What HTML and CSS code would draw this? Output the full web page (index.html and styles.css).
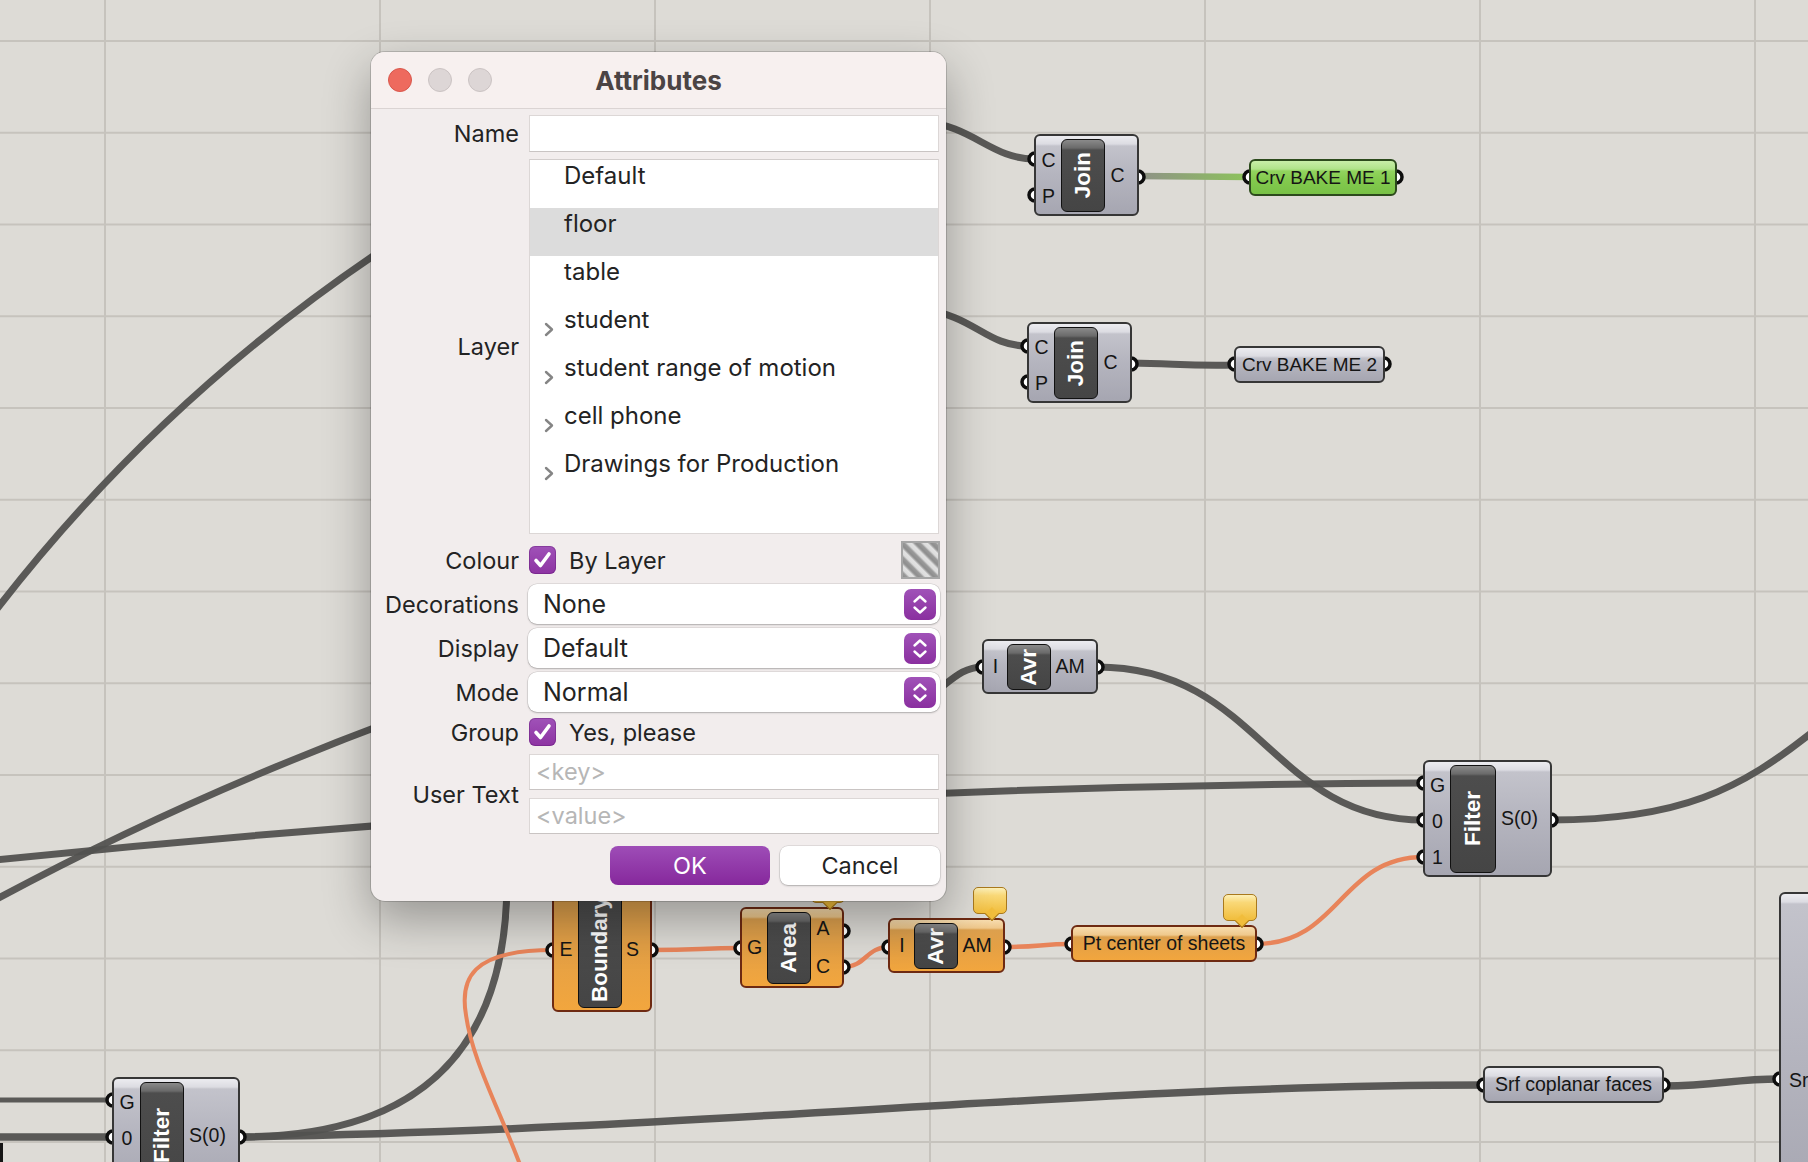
FILE: index.html
```html
<!DOCTYPE html>
<html lang="en">
<head>
<meta charset="utf-8">
<title>Attributes</title>
<link rel="stylesheet" href="styles.css">
</head>
<body>
<div class="canvas">
  <svg class="wires" width="1808" height="1162" viewBox="0 0 1808 1162">
    <defs>
      <linearGradient id="gw" gradientUnits="userSpaceOnUse" x1="1140" y1="0" x2="1248" y2="0">
        <stop offset="0" stop-color="#8f9287"/>
        <stop offset="1" stop-color="#8cc35b"/>
      </linearGradient>
    </defs>
    <g class="w">
      <path d="M -10 618 Q 160 395 400 238"/>
      <path d="M 920 121 C 975 126 990 159 1035 159"/>
      <path d="M 920 309 C 975 315 985 346 1028 346"/>
      <path d="M 1131 363 C 1180 364 1190 366 1235 365"/>
      <path d="M 930 696 C 952 680 962 667 983 667"/>
      <path d="M 1097 667 C 1260 667 1270 820 1424 820"/>
      <path d="M -5 860 C 400 818 900 785 1424 783"/>
      <path d="M -5 900 Q 180 800 400 718"/>
      <path class="thin" d="M -5 1100 L 113 1100"/>
      <path class="thick" d="M -5 1137 L 113 1137"/>
      <path d="M 239 1137 C 420 1137 507 1050 507 880"/>
      <path class="thick" d="M 239 1137 C 700 1130 1100 1085 1484 1085"/>
      <path class="thick" d="M 1663 1086 C 1720 1086 1730 1079 1780 1079"/>
      <path d="M 1551 820 C 1680 820 1740 790 1815 730"/>
    </g>
    <path class="wg" d="M 1138 176 L 1250 177"/>
    <g class="o">
      <path class="othin" d="M 553 950 C 470 950 460 980 466 1015 C 472 1060 500 1110 522 1170"/>
      <path d="M 651 950 C 700 950 700 948 741 948"/>
      <path d="M 843 967 C 866 967 866 947 889 947"/>
      <path d="M 1004 947 C 1040 947 1040 944 1072 944"/>
      <path d="M 1256 944 C 1340 944 1340 857 1424 857"/>
    </g>
    <g class="ports">
      <circle cx="1035" cy="159" r="6"/><circle cx="1035" cy="195" r="6"/><circle cx="1138" cy="177" r="6"/>
      <circle cx="1250" cy="177" r="6"/><circle cx="1396" cy="177" r="6"/>
      <circle cx="1028" cy="346" r="6"/><circle cx="1028" cy="382" r="6"/><circle cx="1131" cy="364" r="6"/>
      <circle cx="1235" cy="364" r="6"/><circle cx="1384" cy="364" r="6"/>
      <circle cx="983" cy="667" r="6"/><circle cx="1097" cy="667" r="6"/>
      <circle cx="1424" cy="783" r="6"/><circle cx="1424" cy="820" r="6"/><circle cx="1424" cy="857" r="6"/><circle cx="1551" cy="820" r="6"/>
      <circle cx="553" cy="950" r="6"/><circle cx="651" cy="950" r="6"/>
      <circle cx="741" cy="948" r="6"/><circle cx="843" cy="931" r="6"/><circle cx="843" cy="967" r="6"/>
      <circle cx="889" cy="947" r="6"/><circle cx="1004" cy="947" r="6"/>
      <circle cx="1072" cy="944" r="6"/><circle cx="1256" cy="944" r="6"/>
      <circle cx="113" cy="1100" r="6"/><circle cx="113" cy="1137" r="6"/><circle cx="239" cy="1137" r="6"/>
      <circle cx="1484" cy="1085" r="6"/><circle cx="1663" cy="1085" r="6"/>
      <circle cx="1780" cy="1079" r="6"/>
    </g>
  </svg>

  <div class="node comp gray n-join1">
    <div class="ins pt6"><span>C</span><span>P</span></div>
    <div class="core"><span>Join</span></div>
    <div class="outs"><span>C</span></div>
  </div>
  <div class="node param green n-crv1">Crv BAKE ME 1</div>

  <div class="node comp gray n-join2">
    <div class="ins pt6"><span>C</span><span>P</span></div>
    <div class="core"><span>Join</span></div>
    <div class="outs"><span>C</span></div>
  </div>
  <div class="node param gray n-crv2">Crv BAKE ME 2</div>

  <div class="node comp gray n-avr">
    <div class="ins w23"><span>I</span></div>
    <div class="core"><span>Avr</span></div>
    <div class="outs"><span>AM</span></div>
  </div>

  <div class="node comp gray n-filterR">
    <div class="ins pt5"><span>G</span><span>0</span><span>1</span></div>
    <div class="core wide"><span>Filter</span></div>
    <div class="outs"><span>S(0)</span></div>
  </div>

  <div class="node comp orange n-boundary">
    <div class="ins w24"><span>E</span></div>
    <div class="core"><span>Boundary</span></div>
    <div class="outs"><span>S</span></div>
  </div>

  <div class="node bubble b-area"></div>
  <div class="node comp orange n-area">
    <div class="ins"><span>G</span></div>
    <div class="core"><span>Area</span></div>
    <div class="outs"><span>A</span><span>C</span></div>
  </div>

  <div class="node bubble b-avr2"></div>
  <div class="node comp orange n-avr2">
    <div class="ins w24"><span>I</span></div>
    <div class="core"><span>Avr</span></div>
    <div class="outs"><span>AM</span></div>
  </div>

  <div class="node bubble b-pt"></div>
  <div class="node param orange n-pt">Pt center of sheets</div>

  <div class="node comp gray n-filterL">
    <div class="ins w26 pt5"><span>G</span><span>0</span><span>1</span></div>
    <div class="core"><span>Filter</span></div>
    <div class="outs"><span>S(0)</span></div>
  </div>

  <div class="node param gray n-srf">Srf coplanar faces</div>

  <div class="node gray n-big"><span class="big-lbl">Sr</span></div>
  <div class="node n-sliver"></div>

  <div class="dialog">
    <div class="titlebar">
      <div class="lights"><span class="light close"></span><span class="light"></span><span class="light"></span></div>
      <div class="title">Attributes</div>
      <div></div>
    </div>
    <div class="dbody">
      <div class="row r-name">
        <span class="lbl">Name</span>
        <div class="field textfield"></div>
      </div>
      <div class="row r-layer">
        <span class="lbl">Layer</span>
        <div class="field list">
          <div class="item"><span class="chev"></span><span class="itxt">Default</span></div>
          <div class="item sel"><span class="chev"></span><span class="itxt">floor</span></div>
          <div class="item"><span class="chev"></span><span class="itxt">table</span></div>
          <div class="item"><span class="chev"><svg width="12" height="16" viewBox="0 0 12 16"><path d="M3 3 L9 8.5 L3 14"/></svg></span><span class="itxt">student</span></div>
          <div class="item"><span class="chev"><svg width="12" height="16" viewBox="0 0 12 16"><path d="M3 3 L9 8.5 L3 14"/></svg></span><span class="itxt">student range of motion</span></div>
          <div class="item"><span class="chev"><svg width="12" height="16" viewBox="0 0 12 16"><path d="M3 3 L9 8.5 L3 14"/></svg></span><span class="itxt">cell phone</span></div>
          <div class="item"><span class="chev"><svg width="12" height="16" viewBox="0 0 12 16"><path d="M3 3 L9 8.5 L3 14"/></svg></span><span class="itxt">Drawings for Production</span></div>
        </div>
      </div>
      <div class="row r-colour">
        <span class="lbl">Colour</span>
        <div class="field checkline">
          <span class="cb"><svg width="27" height="28" viewBox="0 0 27 28"><path d="M7 14.5 L11.5 19.5 L20 8"/></svg></span>
          <span class="cbtxt">By Layer</span>
          <span class="swatch"></span>
        </div>
      </div>
      <div class="row r-pop r-first">
        <span class="lbl">Decorations</span>
        <div class="field popup"><span class="ptxt">None</span><span class="stepper"><svg width="32" height="31" viewBox="0 0 32 31"><path d="M10.5 12.5 L16 7.5 L21.5 12.5 M10.5 18.5 L16 23.5 L21.5 18.5"/></svg></span></div>
      </div>
      <div class="row r-pop">
        <span class="lbl">Display</span>
        <div class="field popup"><span class="ptxt">Default</span><span class="stepper"><svg width="32" height="31" viewBox="0 0 32 31"><path d="M10.5 12.5 L16 7.5 L21.5 12.5 M10.5 18.5 L16 23.5 L21.5 18.5"/></svg></span></div>
      </div>
      <div class="row r-pop">
        <span class="lbl">Mode</span>
        <div class="field popup"><span class="ptxt">Normal</span><span class="stepper"><svg width="32" height="31" viewBox="0 0 32 31"><path d="M10.5 12.5 L16 7.5 L21.5 12.5 M10.5 18.5 L16 23.5 L21.5 18.5"/></svg></span></div>
      </div>
      <div class="row r-group">
        <span class="lbl">Group</span>
        <div class="field checkline">
          <span class="cb"><svg width="27" height="28" viewBox="0 0 27 28"><path d="M7 14.5 L11.5 19.5 L20 8"/></svg></span>
          <span class="cbtxt">Yes, please</span>
        </div>
      </div>
      <div class="row r-user">
        <span class="lbl">User Text</span>
        <div class="field stack">
          <div class="textfield ph">&lt;key&gt;</div>
          <div class="textfield ph">&lt;value&gt;</div>
        </div>
      </div>
      <div class="buttons">
        <button class="btn ok">OK</button>
        <button class="btn cancel">Cancel</button>
      </div>
    </div>
  </div>
</div>
</body>
</html>
```

FILE: styles.css
```css
* { box-sizing: border-box; }
html, body { margin: 0; padding: 0; }
body { width: 1808px; height: 1162px; overflow: hidden; background: #dddbd6; }

.canvas {
  position: relative;
  width: 1808px;
  height: 1162px;
  overflow: hidden;
  background-color: #dddbd6;
  background-image:
    linear-gradient(90deg, #c6c3bd 0, #c6c3bd 2px, transparent 2px),
    linear-gradient(180deg, #c6c3bd 0, #c6c3bd 2px, transparent 2px);
  background-size: 275px 100%, 100% 91.75px;
  background-position: 104px 0, 0 40px;
}

.wires { position: absolute; left: 0; top: 0; z-index: 1; }
.wires .w path { fill: none; stroke: #525250; stroke-width: 7; stroke-linecap: round; opacity: 0.95; }
.wires .w path.thin { stroke-width: 5; }
.wires .w path.thick { stroke-width: 7.5; }
.wires .wg { fill: none; stroke: url(#gw); stroke-width: 6.5; }
.wires .o path { fill: none; stroke: #e8845a; stroke-width: 4.5; stroke-linecap: round; }
.wires .o path.othin { stroke-width: 4; }
.wires .ports circle { fill: #fff; stroke: #0d0d0d; stroke-width: 3.5; }

/* ---------- canvas nodes ---------- */
.node { position: absolute; z-index: 2; }
.comp {
  display: flex;
  border: 2px solid #363636;
  border-radius: 6px;
  font-family: "Liberation Sans", Arial, sans-serif;
  font-size: 19.5px;
  color: #151515;
}
.gray {
  background: linear-gradient(180deg, #ececf0 0, #dcdce2 8px, #c3c3cb 10px, #b6b6c0 45%, #a6a6b1 100%);
  border: 2px solid #363636;
  border-radius: 6px;
}
.orange {
  background: linear-gradient(180deg, #f7dcae 0, #efc88c 8px, #dca04e 10px, #e4a045 50%, #f2a63e 100%);
  border: 2px solid #6e2a12;
  border-radius: 6px;
}
.green {
  background: linear-gradient(180deg, #c8eea8 0, #b0e38a 8px, #92d45e 10px, #84cb4f 55%, #78c146 100%);
  border: 2px solid #2c4a1c;
  border-radius: 6px;
}

.ins { width: 25px; flex: none; display: flex; flex-direction: column; }
.ins.w23 { width: 23px; }
.ins.w24 { width: 24px; }
.ins.w26 { width: 26px; }
.ins.pt6 { padding-top: 6px; }
.ins.pt5 { padding-top: 5px; }
.outs { flex: 1; display: flex; flex-direction: column; }
.ins span, .outs span { flex: 1; display: flex; align-items: center; justify-content: center; }
.outs span { padding-right: 7px; }

.core {
  width: 44px;
  flex: none;
  margin: 3px 0 2px;
  border: 1.5px solid #111;
  border-radius: 6px;
  background: linear-gradient(180deg, #8a8a8a 0, #6a6a6a 8px, #4d4d4d 10px, #454545 100%);
  display: flex;
  align-items: center;
  justify-content: center;
  overflow: visible;
}
.core.wide { width: 46px; }
.core span {
  writing-mode: vertical-rl;
  transform: rotate(180deg);
  color: #fff;
  font-weight: bold;
  font-size: 22.5px;
  white-space: nowrap;
  line-height: 1;
}

.param {
  display: flex;
  align-items: center;
  justify-content: center;
  font-family: "Liberation Sans", Arial, sans-serif;
  font-size: 19px;
  color: #151515;
  white-space: nowrap;
}

.n-join1 { left: 1034px; top: 134px; width: 105px; height: 82px; }
.n-crv1 { left: 1249px; top: 159px; width: 148px; height: 37px; }
.n-join2 { left: 1027px; top: 322px; width: 105px; height: 81px; }
.n-crv2 { left: 1234px; top: 346px; width: 151px; height: 37px; }
.n-avr { left: 982px; top: 639px; width: 116px; height: 55px; }
.n-filterR { left: 1423px; top: 760px; width: 129px; height: 117px; }
.n-boundary { left: 552px; top: 886px; width: 100px; height: 126px; }
.n-area { left: 740px; top: 907px; width: 104px; height: 81px; }
.n-avr2 { left: 888px; top: 918px; width: 117px; height: 55px; }
.n-pt { left: 1071px; top: 925px; width: 186px; height: 37px; font-size: 19.5px; }
.n-filterL { left: 112px; top: 1077px; width: 128px; height: 117px; }
.n-srf { left: 1483px; top: 1066px; width: 181px; height: 37px; font-size: 19.5px; }
.n-big { left: 1779px; top: 892px; width: 80px; height: 320px; font-family: "Liberation Sans", Arial, sans-serif; font-size: 19.5px; color: #151515; }
.big-lbl { display: block; margin: 175px 0 0 8px; }
.n-sliver { left: 0; top: 1143px; width: 3px; height: 19px; background: #151515; }

.bubble {
  width: 34px;
  height: 27px;
  border: 1.5px solid #a9791d;
  border-radius: 5px;
  background: linear-gradient(180deg, #fdf0b8 0, #f9d877 30%, #f1bd3c 100%);
  z-index: 3;
}
.bubble::after {
  content: "";
  position: absolute;
  left: 13px;
  bottom: -6px;
  width: 9px;
  height: 9px;
  background: #f1bd3c;
  border-right: 1.5px solid #a9791d;
  border-bottom: 1.5px solid #a9791d;
  transform: rotate(45deg);
}
.b-area { left: 811px; top: 876px; }
.b-avr2 { left: 973px; top: 887px; }
.b-pt { left: 1223px; top: 894px; }

/* ---------- dialog ---------- */
.dialog {
  position: absolute;
  left: 371px;
  top: 52px;
  width: 575px;
  z-index: 10;
  background: #f2eded;
  border-radius: 14px;
  box-shadow: 0 0 0 1px rgba(0,0,0,0.16), 0 18px 48px rgba(0,0,0,0.32);
  font-family: "Inter", "Noto Sans", sans-serif;
  font-size: 23.5px;
  color: #232323;
  overflow: hidden;
}
.titlebar {
  height: 57px;
  display: grid;
  grid-template-columns: 1fr auto 1fr;
  align-items: center;
  background: #f7f0ef;
  border-bottom: 1px solid #dbd4d3;
}
.lights { display: flex; gap: 16px; padding-left: 17px; }
.light {
  width: 24px;
  height: 24px;
  border-radius: 50%;
  background: #ddd6d6;
  border: 1px solid #cbc3c3;
}
.light.close { background: #ee6a5e; border-color: #d9574c; }
.title { font-weight: 700; font-size: 26px; color: #4b4444; }

.dbody { padding: 6px 7px 16px 0; }
.row { display: flex; align-items: center; gap: 10px; }
.lbl { width: 148px; flex: none; text-align: right; white-space: nowrap; }
.field { width: 410px; flex: none; }

.textfield {
  height: 37px;
  background: #fff;
  border: 1px solid #dcd7d6;
  border-bottom-color: #c9c4c3;
}
.r-layer { margin-top: 7px; }
.list {
  height: 375px;
  background: #fff;
  border: 1px solid #dcd7d6;
  border-top: 1px solid #d2cdcc;
}
.item { height: 48px; display: flex; align-items: flex-start; padding-left: 13px; }
.item.sel { background: #dcdcdc; }
.chev { width: 21px; height: 16px; flex: none; margin-top: 17px; }
.chev svg { display: block; }
.chev path { fill: none; stroke: #858585; stroke-width: 2.4; stroke-linecap: round; stroke-linejoin: round; }
.itxt { font-size: 24px; line-height: 28px; padding-top: 2px; white-space: nowrap; }

.r-colour { margin-top: 7px; height: 38px; }
.checkline { display: flex; align-items: center; }
.cb {
  width: 27px;
  height: 28px;
  flex: none;
  border-radius: 6px;
  background: linear-gradient(180deg, #a052b8 0, #8d33a2 100%);
  box-shadow: inset 0 0 0 1px rgba(90,20,110,0.35);
}
.cb svg { display: block; }
.cb path { fill: none; stroke: #fff; stroke-width: 3.6; stroke-linecap: round; stroke-linejoin: round; }
.cbtxt { margin-left: 13px; }
.swatch {
  margin-left: auto;
  margin-right: -1px;
  width: 39px;
  height: 38px;
  border: 2px solid #a6a6a6;
  background: repeating-linear-gradient(45deg, #8e8e8e 0, #9a9a9a 3px, #dcdcdc 5px, #e2e2e2 8px, #9a9a9a 10px, #8e8e8e 11px);
}

.r-pop { margin-top: 4px; }
.r-pop.r-first { margin-top: 5px; }
.popup {
  width: 412px;
  margin-left: -1px;
  height: 40px;
  background: #fff;
  border-radius: 9px;
  box-shadow: 0 0 0 0.5px rgba(0,0,0,0.14), 0 1px 2px rgba(0,0,0,0.22);
  display: flex;
  align-items: center;
  padding-left: 15px;
  padding-right: 4px;
}
.ptxt { flex: 1; font-size: 25px; }
.stepper {
  width: 32px;
  height: 31px;
  border-radius: 7px;
  background: linear-gradient(180deg, #a052b8 0, #8a2f9f 100%);
}
.stepper svg { display: block; }
.stepper path { fill: none; stroke: #fff; stroke-width: 2.4; stroke-linecap: round; stroke-linejoin: round; }

.r-group { margin-top: 6px; height: 28px; }
.r-user { margin-top: 8px; }
.stack { display: flex; flex-direction: column; gap: 8px; }
.stack .textfield { height: 36px; }
.ph { color: #b6b6b6; padding-left: 6px; line-height: 34px; }

.buttons { display: flex; justify-content: flex-end; gap: 10px; margin-top: 12px; margin-right: -1px; }
.btn {
  width: 160px;
  height: 39px;
  border: none;
  border-radius: 8px;
  font-family: "Inter", "Noto Sans", sans-serif;
  font-size: 23.5px;
  padding: 0;
}
.btn.ok { background: linear-gradient(180deg, #9e4db7 0, #86289c 100%); color: #fff; }
.btn.cancel { background: #fff; color: #232323; box-shadow: 0 0 0 0.5px rgba(0,0,0,0.14), 0 1px 2px rgba(0,0,0,0.22); }
```
